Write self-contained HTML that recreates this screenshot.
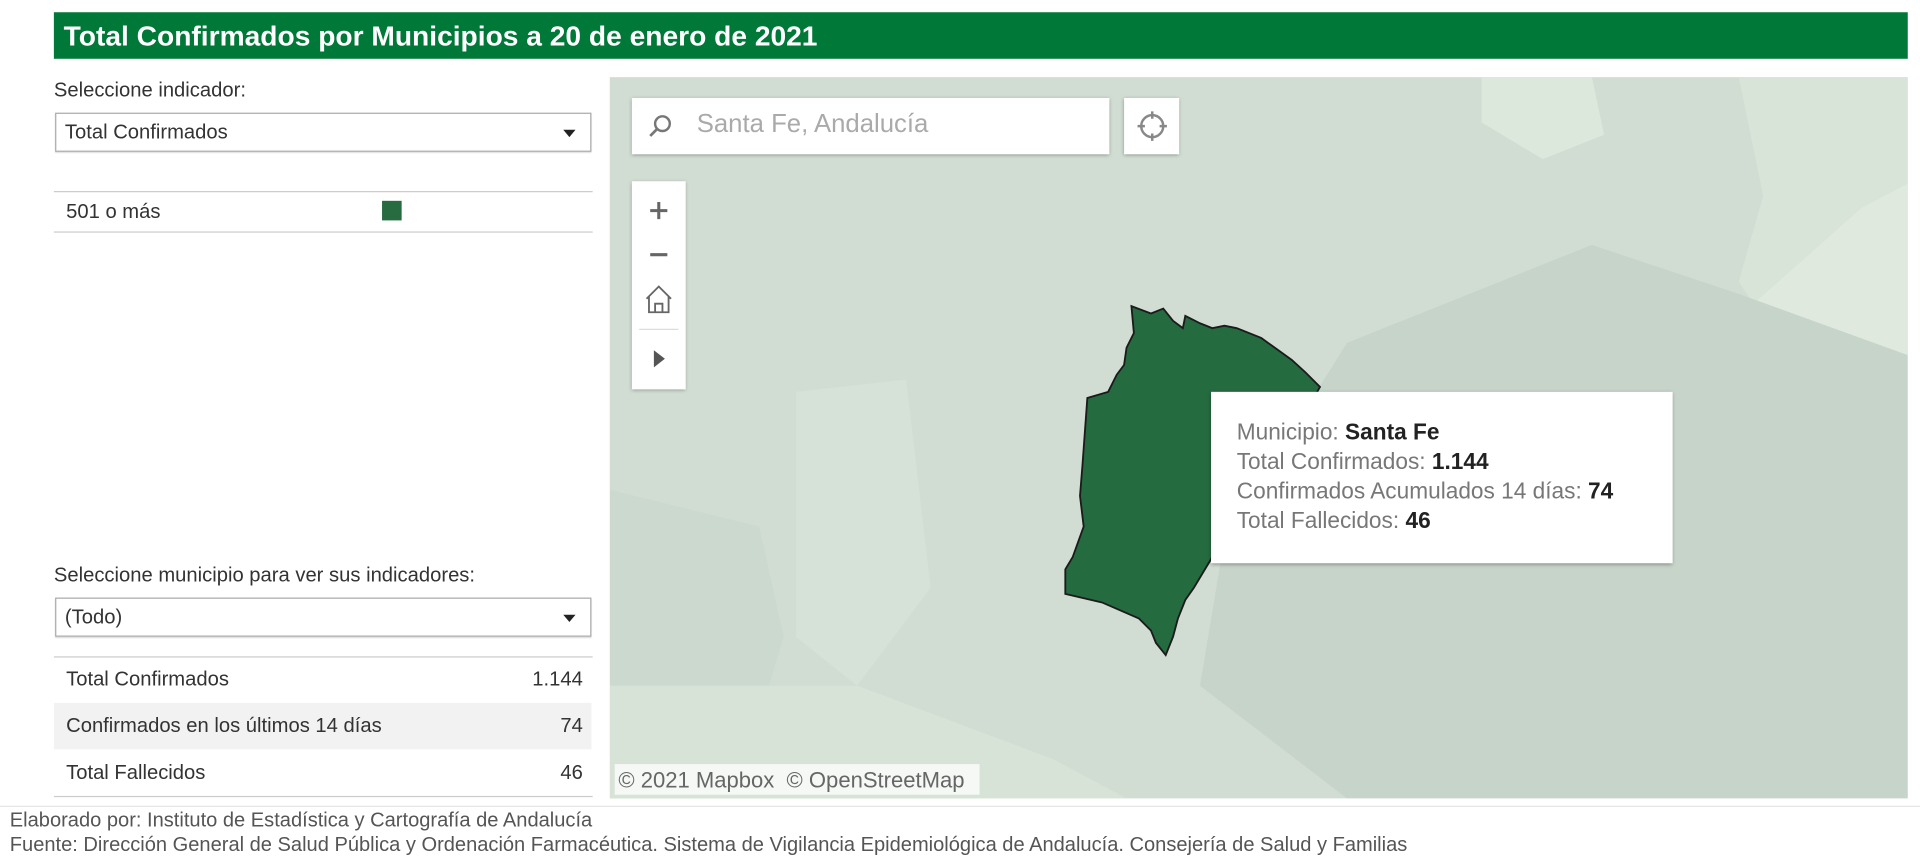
<!DOCTYPE html>
<html><head><meta charset="utf-8"><style>
html,body{margin:0;padding:0;width:1920px;height:867px;overflow:hidden;background:#fff}
#w{position:absolute;left:0;top:0;width:1568px;height:708px;transform:scale(1.22449);transform-origin:0 0;font-family:"Liberation Sans",sans-serif;color:#333}
.a{position:absolute}
.title{left:44px;top:10px;width:1514px;height:38px;background:#007838;color:#fff;font-weight:bold;font-size:23px;line-height:39px;padding-left:8px;box-sizing:border-box}
.lbl{font-size:16.5px;color:#333}
.dd{border:1px solid #aaa;background:#fff;font-size:16.5px;line-height:31px;padding-left:7px;box-sizing:border-box;box-shadow:0 1px 1px rgba(0,0,0,.15)}
.dd:after{content:"";position:absolute;right:12px;top:13px;border:5px solid transparent;border-top:6px solid #222;border-bottom:0}
.hl{height:1px;background:#ccc}
.row{left:44px;width:439px;height:38px;font-size:16.5px;line-height:38px}
.row span{position:absolute;left:10px}.row b{position:absolute;right:7px;font-weight:normal}
.box{background:#fff;box-shadow:0 1px 3px rgba(0,0,0,.35)}
.tip{font-size:18.5px;line-height:24px;color:#777}.tip b{color:#222}
.foot{font-size:16.4px;color:#555;left:8px}
</style></head><body><div id="w">
<div class="a title">Total Confirmados por Municipios a 20 de enero de 2021</div>
<div class="a lbl" style="left:44px;top:65px">Seleccione indicador:</div>
<div class="a dd" style="left:45px;top:92px;width:438px;height:32px">Total Confirmados</div>
<div class="a hl" style="left:44px;top:156px;width:440px"></div>
<div class="a" style="left:54px;top:164px;font-size:16.5px">501 o más</div>
<div class="a" style="left:312px;top:164px;width:16px;height:16px;background:#276b40"></div>
<div class="a hl" style="left:44px;top:189px;width:440px"></div>

<div class="a lbl" style="left:44px;top:461px">Seleccione municipio para ver sus indicadores:</div>
<div class="a dd" style="left:45px;top:488px;width:438px;height:32px">(Todo)</div>
<div class="a hl" style="left:44px;top:536px;width:440px"></div>
<div class="a row" style="top:536px"><span>Total Confirmados</span><b>1.144</b></div>
<div class="a row" style="top:574px;background:#f2f2f2"><span>Confirmados en los últimos 14 días</span><b>74</b></div>
<div class="a row" style="top:612px"><span>Total Fallecidos</span><b>46</b></div>
<div class="a hl" style="left:44px;top:650px;width:440px"></div>

<div class="a" style="left:498px;top:63px;width:1060px;height:589px;background:#d1ddd3;overflow:hidden">
<svg width="1060" height="589" viewBox="498 63 1060 589" style="position:absolute;left:0;top:0">
<path d="M1210 63 L1300 63 1310 110 1260 130 1210 100Z" fill="#dde8dc"/>
<path d="M1420 63 L1558 63 1558 150 1500 190 1440 260 1420 230 1440 160Z" fill="#d9e4d8"/>
<path d="M1430 250 L1520 170 1558 150 1558 290 1500 300 1440 300Z" fill="#dfe9de"/>
<path d="M1100 280 L1300 200 1420 240 1558 290 1558 652 1100 652 980 560 1000 440Z" fill="#c7d4ca"/>
<path d="M498 400 L620 430 640 520 600 652 498 652Z" fill="#ccd9ce"/>
<path d="M650 320 L740 310 760 480 700 560 650 520Z" fill="#d6e1d7"/>
<path d="M498 560 L700 560 860 620 920 652 498 652Z" fill="#d8e3d7"/>
<path d="M924 250 L940 256 950 252 958 262 966 268 968 258 980 264 990 268 1000 266 1010 268 1030 276 1044 286 1055 294 1066 304 1078 316 1070 330 1000 380 990 455 975 480 968 490 962 505 958 520 952 535 944 525 940 515 930 505 900 492 870 485 870 465 876 455 885 430 882 405 884 380 888 325 905 320 912 306 918 298 920 284 926 272Z" fill="#256b40" stroke="#1b1b1b" stroke-width="1.5"/>
</svg>
</div>

<div class="a box" style="left:516px;top:80px;width:390px;height:46px">
<svg class="a" style="left:12px;top:12px" width="22" height="22" viewBox="0 0 22 22"><circle cx="13" cy="9" r="6" fill="none" stroke="#777" stroke-width="2"/><path d="M9 13 L3 19" stroke="#777" stroke-width="2.2"/></svg>
<div class="a" style="left:53px;top:10px;font-size:21px;color:#aaa">Santa Fe, Andalucía</div></div>
<div class="a box" style="left:918px;top:80px;width:45px;height:46px">
<svg class="a" style="left:9px;top:9px" width="28" height="28" viewBox="0 0 28 28" fill="none" stroke="#888" stroke-width="2"><circle cx="14" cy="14" r="9"/><path d="M14 2v6M14 20v6M2 14h6M20 14h6"/></svg></div>
<div class="a box" style="left:516px;top:148px;width:44px;height:170px">
<svg width="44" height="170" viewBox="0 0 44 170"><path d="M15 24h14M22 17v14M15 60h14" stroke="#666" stroke-width="2.5"/><path d="M12 96 L22 86 32 96 M14 94v13h16v-13 M19 107v-7h6v7" fill="none" stroke="#666" stroke-width="1.5"/><path d="M6 121h32" stroke="#ddd"/><path d="M18 138 L27 145 18 152Z" fill="#555"/></svg></div>

<div class="a box tip" style="left:989px;top:320px;width:377px;height:140px;box-sizing:border-box;padding:21px 0 0 21px">Municipio: <b>Santa Fe</b><br>Total Confirmados: <b>1.144</b><br>Confirmados Acumulados 14 días: <b>74</b><br>Total Fallecidos: <b>46</b></div>

<div class="a" style="left:502px;top:624px;height:25px;width:298px;background:rgba(255,255,255,.75);font-size:18px;line-height:26px;color:#666;padding-left:3px;box-sizing:border-box;white-space:nowrap">© 2021 Mapbox &nbsp;© OpenStreetMap</div>

<div class="a hl" style="left:0;top:658px;width:1568px;background:#e5e5e5"></div>
<div class="a foot" style="top:661px">Elaborado por: Instituto de Estadística y Cartografía de Andalucía</div>
<div class="a foot" style="top:681px">Fuente: Dirección General de Salud Pública y Ordenación Farmacéutica. Sistema de Vigilancia Epidemiológica de Andalucía. Consejería de Salud y Familias</div>
</div></body></html>
